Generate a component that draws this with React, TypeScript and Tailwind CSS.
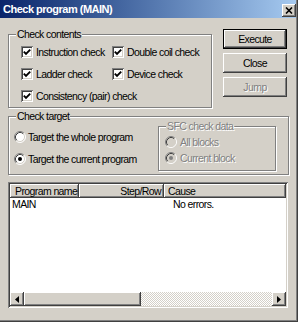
import React from "react";

const raised =
  "shadow-[inset_-1px_-1px_0_#404040,inset_1px_1px_0_#ffffff,inset_-2px_-2px_0_#808080,inset_2px_2px_0_#d4d0c8]";
const sunken =
  "shadow-[inset_1px_1px_0_#808080,inset_-1px_-1px_0_#ffffff,inset_2px_2px_0_#404040,inset_-2px_-2px_0_#d4d0c8]";
const etched = "relative border border-[#808080] shadow-[inset_1px_1px_0_#ffffff,1px_1px_0_#ffffff]";
const disabledText = "text-[#808080] [text-shadow:1px_1px_0_#ffffff]";

function Legend({ children, disabled }: { children: React.ReactNode; disabled?: boolean }) {
  return (
    <span
      className={`absolute top-[-7px] left-[7px] px-[1px] bg-[#d4d0c8] leading-[12px] ${
        disabled ? disabledText : ""
      }`}
    >
      {children}
    </span>
  );
}

function Checkbox({ label }: { label: string }) {
  return (
    <div className="flex items-center h-[22px]">
      <span className={`w-[12px] h-[12px] bg-white flex items-center justify-center ${sunken}`}>
        <svg width="8" height="8" viewBox="0 0 8 8">
          <path d="M0.8 3.6 L3 5.8 L7.2 1.6" stroke="#000" strokeWidth="1.9" fill="none" />
        </svg>
      </span>
      <span className="ml-[3px]">{label}</span>
    </div>
  );
}

function RadioDot({ on, disabled }: { on?: boolean; disabled?: boolean }) {
  return (
    <svg width="12" height="12" viewBox="0 0 12 12" className="shrink-0">
      <circle cx="6" cy="6" r="5" fill={disabled ? "#d4d0c8" : "#ffffff"} />
      <path d="M2.11 9.89 A5.5 5.5 0 0 1 9.89 2.11" stroke="#808080" fill="none" />
      <path d="M9.89 2.11 A5.5 5.5 0 0 1 2.11 9.89" stroke="#ffffff" fill="none" />
      <path d="M2.82 9.18 A4.5 4.5 0 0 1 9.18 2.82" stroke="#404040" fill="none" />
      <path d="M9.18 2.82 A4.5 4.5 0 0 1 2.82 9.18" stroke="#d4d0c8" fill="none" />
      {on && <circle cx="6" cy="6" r="2" fill={disabled ? "#808080" : "#000000"} />}
    </svg>
  );
}

function Radio({
  label,
  on,
  disabled,
  gap = "ml-[2px]",
  h = "h-[22px]",
}: {
  label: string;
  on?: boolean;
  disabled?: boolean;
  gap?: string;
  h?: string;
}) {
  return (
    <div className={`flex items-center ${h}`}>
      <RadioDot on={on} disabled={disabled} />
      <span className={`${gap} ${disabled ? disabledText : ""}`}>{label}</span>
    </div>
  );
}

export default function App() {
  return (
    <div className="w-[300px] h-[323px] bg-white font-['Liberation_Sans',Arial,sans-serif] text-[10.5px] tracking-[-0.6px] text-black leading-none">
      <div className="w-[298px] h-[322px] bg-[#d4d0c8] shadow-[inset_-1px_-1px_0_#404040,inset_-2px_-2px_0_#808080]">
        {/* title bar */}
        <div className="w-[296px] h-[18px] flex items-center justify-between bg-linear-to-r from-[#0a246a] to-[#a6caf0]">
          <span className="pl-[3px] text-white font-bold text-[11px] tracking-[-0.5px]">
            Check program (MAIN)
          </span>
          <span className={`w-[14px] h-[13px] mt-[3px] bg-[#d4d0c8] flex items-center justify-center ${raised}`}>
            <svg width="8" height="7" viewBox="0 0 8 7">
              <path d="M1 0.5 L7 6.5 M7 0.5 L1 6.5" stroke="#000" strokeWidth="1.6" />
            </svg>
          </span>
        </div>

        <div className="pl-[8px]">
          {/* top row */}
          <div className="flex items-start">
            <div className={`mt-[16px] w-[204px] h-[74px] pt-[6px] pl-[12px] ${etched}`}>
              <Legend>Check contents</Legend>
              <div className="grid grid-cols-[91px_1fr]">
                <Checkbox label="Instruction check" />
                <Checkbox label="Double coil check" />
                <Checkbox label="Ladder check" />
                <Checkbox label="Device check" />
                <div className="col-span-2">
                  <Checkbox label="Consistency (pair) check" />
                </div>
              </div>
            </div>

            <div className="mt-[11px] ml-[11px] w-[64px] flex flex-col gap-[4px]">
              <div className="h-[20px] border border-black">
                <div className={`h-full flex items-center justify-center ${raised}`}>Execute</div>
              </div>
              <div className={`h-[20px] flex items-center justify-center ${raised}`}>Close</div>
              <div className={`h-[20px] flex items-center justify-center ${raised} ${disabledText}`}>
                Jump
              </div>
            </div>
          </div>

          {/* check target */}
          <div className={`mt-[8px] w-[281px] h-[59px] flex ${etched}`}>
            <Legend>Check target</Legend>
            <div className="w-[149px] pt-[9px] pl-[5px]">
              <Radio label="Target the whole program" />
              <Radio label="Target the current program" on />
            </div>
            <div className={`mt-[9px] w-[118px] h-[45px] pt-[7px] pl-[6px] ${etched}`}>
              <Legend disabled>SFC check data</Legend>
              <Radio label="All blocks" disabled gap="ml-[3px]" h="h-[16px]" />
              <Radio label="Current block" on disabled gap="ml-[3px]" h="h-[16px]" />
            </div>
          </div>

          {/* result list */}
          <div className={`mt-[7px] w-[280px] h-[126px] p-[2px] ${sunken}`}>
            <div className="h-full flex flex-col bg-white">
              <div className="flex h-[14px] bg-[#d4d0c8]">
                <div className={`w-[69px] flex items-center pl-[5px] ${raised}`}>Program name</div>
                <div className={`w-[85px] flex items-center justify-end pr-[3px] ${raised}`}>Step/Row</div>
                <div className={`flex-1 flex items-center pl-[4px] ${raised}`}>Cause</div>
              </div>
              <div className="flex-1">
                <div className="flex h-[13px] items-center">
                  <div className="w-[154px] pl-[2px]">MAIN</div>
                  <div className="pl-[9px]">No errors.</div>
                </div>
              </div>
              <div className="flex h-[14px]">
                <div className={`w-[14px] bg-[#d4d0c8] flex items-center justify-center ${raised}`}>
                  <svg width="4" height="7" viewBox="0 0 4 7">
                    <path d="M4 0 L0 3.5 L4 7 Z" fill="#000" />
                  </svg>
                </div>
                <div className={`w-[117px] bg-[#d4d0c8] ${raised}`} />
                <div className="flex-1 bg-[repeating-conic-gradient(#d4d0c8_0_25%,#ffffff_0_50%)] bg-[length:2px_2px]" />
                <div className={`w-[14px] bg-[#d4d0c8] flex items-center justify-center ${raised}`}>
                  <svg width="4" height="7" viewBox="0 0 4 7">
                    <path d="M0 0 L4 3.5 L0 7 Z" fill="#000" />
                  </svg>
                </div>
              </div>
            </div>
          </div>
        </div>
      </div>
    </div>
  );
}
